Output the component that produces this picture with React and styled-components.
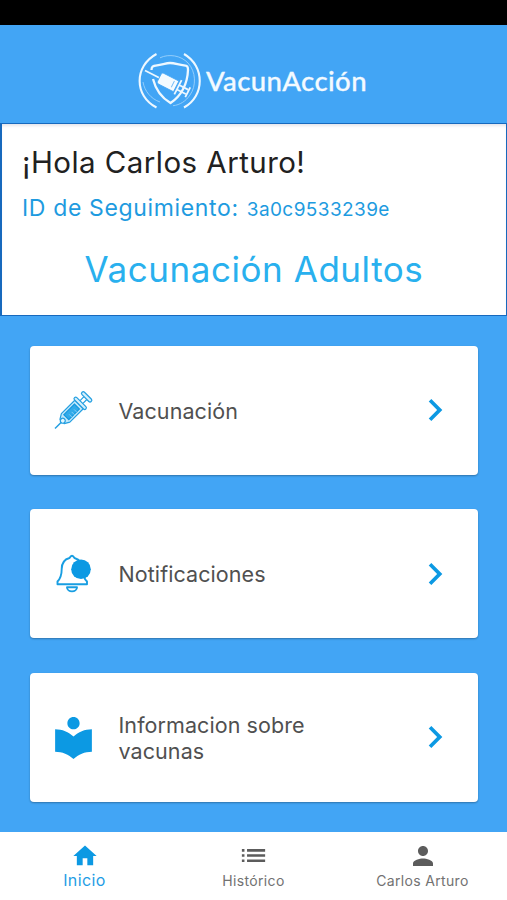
import React from 'react'
import styled, { createGlobalStyle } from 'styled-components'
import { MdChevronRight, MdHome, MdList, MdLocalLibrary, MdPerson } from 'react-icons/md'

const GlobalStyle = createGlobalStyle`
  * {
    box-sizing: border-box;
  }

  body {
    margin: 0;
    background: #42a5f5;
    font-family: Inter, "Liberation Sans", sans-serif;
  }
`

const Screen = styled.div`
  display: flex;
  flex-direction: column;
  width: 507px;
  height: 900px;
  overflow: hidden;
  background: #42a5f5;
`

const StatusBar = styled.div`
  flex: none;
  height: 25px;
  background: #000;
`

const Header = styled.header`
  flex: none;
  display: flex;
  align-items: center;
  height: 98px;
  padding: 13px 0 0 138px;
`

const Brand = styled.span`
  margin: 0 0 1px 4px;
  color: #f3faff;
  font-family: Lato, sans-serif;
  font-size: 27.5px;
  font-weight: 500;
  letter-spacing: 0.4px;
  white-space: nowrap;
  -webkit-text-stroke: 0.3px #f3faff;
`

const Greeting = styled.section`
  flex: none;
  height: 193px;
  padding: 20px 20px 0;
  border: 1px solid #1769bd;
  border-left-width: 2px;
  background: #fff;
  box-shadow: inset 0 3px 3px -1px #e6e6ec;
  white-space: nowrap;
`

const Hello = styled.h1`
  margin: 0;
  color: #212121;
  font-size: 29.5px;
  font-weight: 400;
  line-height: 37px;
  letter-spacing: 0.45px;
`

const Tracking = styled.div`
  display: flex;
  align-items: baseline;
  gap: 8px;
  margin-top: 9px;
  color: #1e9be0;
  font-size: 23px;
  line-height: 36px;
  letter-spacing: 0.65px;
`

const TrackingId = styled.span`
  font-size: 19px;
  letter-spacing: 0.4px;
`

const Program = styled.h2`
  margin: 17px 0 0;
  color: #29b0ee;
  font-size: 35px;
  font-weight: 400;
  line-height: 48px;
  letter-spacing: 0.55px;
  text-align: center;
`

const Menu = styled.main`
  flex: 1;
  display: flex;
  flex-direction: column;
  gap: 34.5px;
  padding: 29.6px 29.5px 0 30px;
`

const Card = styled.div`
  flex: none;
  display: flex;
  align-items: center;
  height: 129px;
  padding: 0 20.5px 0 18.5px;
  border-radius: 4px;
  background: #fff;
  box-shadow: 0 1px 2px rgba(0, 0, 0, 0.3);
  color: #0c99e3;
`

const CardIcon = styled.span`
  flex: none;
  display: flex;
  width: 49px;
`

const CardLabel = styled.span`
  flex: 1;
  padding: 1px 100px 0 21px;
  color: #505050;
  font-size: 21.5px;
  line-height: 26px;
  letter-spacing: 0.08px;
`

const TabBar = styled.nav`
  flex: none;
  display: grid;
  grid-template-columns: repeat(3, 1fr);
  height: 68px;
  background: #fff;
`

const Tab = styled.div`
  display: flex;
  flex-direction: column;
  align-items: center;
  color: ${props => (props.$active ? '#0c99e3' : '#5c5c5c')};
`

const TabIcon = styled.span`
  display: flex;
  align-items: center;
  height: 31px;
  margin-top: 8px;
`

const TabLabel = styled.span`
  color: ${props => (props.$active ? '#1e9de5' : '#727272')};
  font-size: ${props => (props.$active ? 16 : 14)}px;
  line-height: ${props => (props.$active ? 18 : 20)}px;
  letter-spacing: ${props => (props.$active ? 0.4 : 0.33)}px;
`

const ShieldLogo = () => (
  <svg width="64" height="60" viewBox="0 0 64 60" fill="none" stroke="#eef8ff">
    <path d="M18.500 3C-4 15-4 45 18.500 56.500M46 3C67 15 67 45 46 56.500" strokeWidth="2.100" />
    <path d="M22 6.800C31 2.500 43 4.500 50 12C58 20.500 58.500 35 52 44C48 50 42 54 35 54.700M5 31C6.500 40 13 48 22 51" stroke="#9bd1fc" strokeWidth="0.9" />
    <path d="M13.500 19C13.500 15.500 14.500 14.800 19 14.300C24 13.800 28 12 32 12C37 12 41 14 46 14.300C49.500 14.500 50 15.500 50 19C49.500 33 43 45.500 32.500 52C24 47 17.500 38 15 28" strokeWidth="2.300" strokeLinejoin="round" />
    <g transform="translate(7 19.500) rotate(27)">
      <path d="M0 0H17" strokeWidth="1.800" />
      <path d="M18-6H35V6H18Q16 6 16 4V-4Q16-6 18-6Z" fill="#f4fbff" stroke="#42a5f5" strokeWidth="0.8" />
      <path d="M31 3V-4" stroke="#72bdf8" strokeWidth="0.9" />
      <path d="M37-8V8M37-2.500H47M37 2.500H47M48-5.500V5.500" strokeWidth="1.800" />
    </g>
  </svg>
)

const SyringeIcon = () => (
  <svg width="49" height="49" viewBox="0 0.5 49 49" fill="none" stroke="#249fe1" strokeWidth="1.2">
    <g transform="translate(6 43) rotate(-45)">
      <path d="M0 0H10" strokeWidth="1.5" />
      <path d="M10-3L15-6H34V6H15L10 3Z" fill="#c4e9fb" strokeLinejoin="round" />
      <rect x="16" y="-3.5" width="15" height="7" fill="#31aae9" stroke="#1598df" />
      <path d="M20 4V0M23.5 4V0M27 4V0" stroke="#90d5f5" strokeWidth="0.8" />
      <circle cx="11" cy="0" r="2.5" fill="#e3f6fe" />
      <rect x="34" y="-8" width="3.3" height="16" rx="1.6" fill="#d5effc" />
      <path d="M37.5-2H43M37.5 2H43" />
      <rect x="43" y="-6.5" width="3.5" height="13" rx="1.7" fill="#d5effc" />
    </g>
  </svg>
)

const BellIcon = () => (
  <svg width="49" height="49" viewBox="0 0 49 49" fill="none" stroke="#189ee2" strokeWidth="1.9" strokeLinejoin="round">
    <path d="M20.5 9Q23 4.500 25.500 9C31 10.500 33.500 14 33.500 20C33.500 26 34.500 29 38 32.500V35.200H8.500V32.500C12 29 12.700 26 12.700 20C12.700 14 15 10.500 20.500 9Z" />
    <path d="M18 38.200C18 43.700 28 43.700 28 38.200Z" />
    <circle cx="32" cy="20.300" r="9.800" fill="#0c99e3" stroke="none" />
  </svg>
)

const cards = [
  { label: 'Vacunación', icon: <SyringeIcon /> },
  { label: 'Notificaciones', icon: <BellIcon /> },
  { label: 'Informacion sobre vacunas', icon: <MdLocalLibrary size={49} /> }
]

const tabs = [
  { label: 'Inicio', icon: <MdHome size={28} />, active: true },
  { label: 'Histórico', icon: <MdList size={31} /> },
  { label: 'Carlos Arturo', icon: <MdPerson size={30} /> }
]

const App = () => (
  <Screen>
    <GlobalStyle />
    <StatusBar />
    <Header>
      <ShieldLogo />
      <Brand>VacunAcción</Brand>
    </Header>
    <Greeting>
      <Hello>¡Hola Carlos Arturo!</Hello>
      <Tracking>
        ID de Seguimiento:
        <TrackingId>3a0c9533239e</TrackingId>
      </Tracking>
      <Program>Vacunación Adultos</Program>
    </Greeting>
    <Menu>
      {
        cards.map(item => (
          <Card key={item.label}>
            <CardIcon>{item.icon}</CardIcon>
            <CardLabel>{item.label}</CardLabel>
            <MdChevronRight size={44} />
          </Card>
        ))
      }
    </Menu>
    <TabBar>
      {
        tabs.map(item => (
          <Tab key={item.label} $active={item.active}>
            <TabIcon>{item.icon}</TabIcon>
            <TabLabel $active={item.active}>{item.label}</TabLabel>
          </Tab>
        ))
      }
    </TabBar>
  </Screen>
)

export default App
